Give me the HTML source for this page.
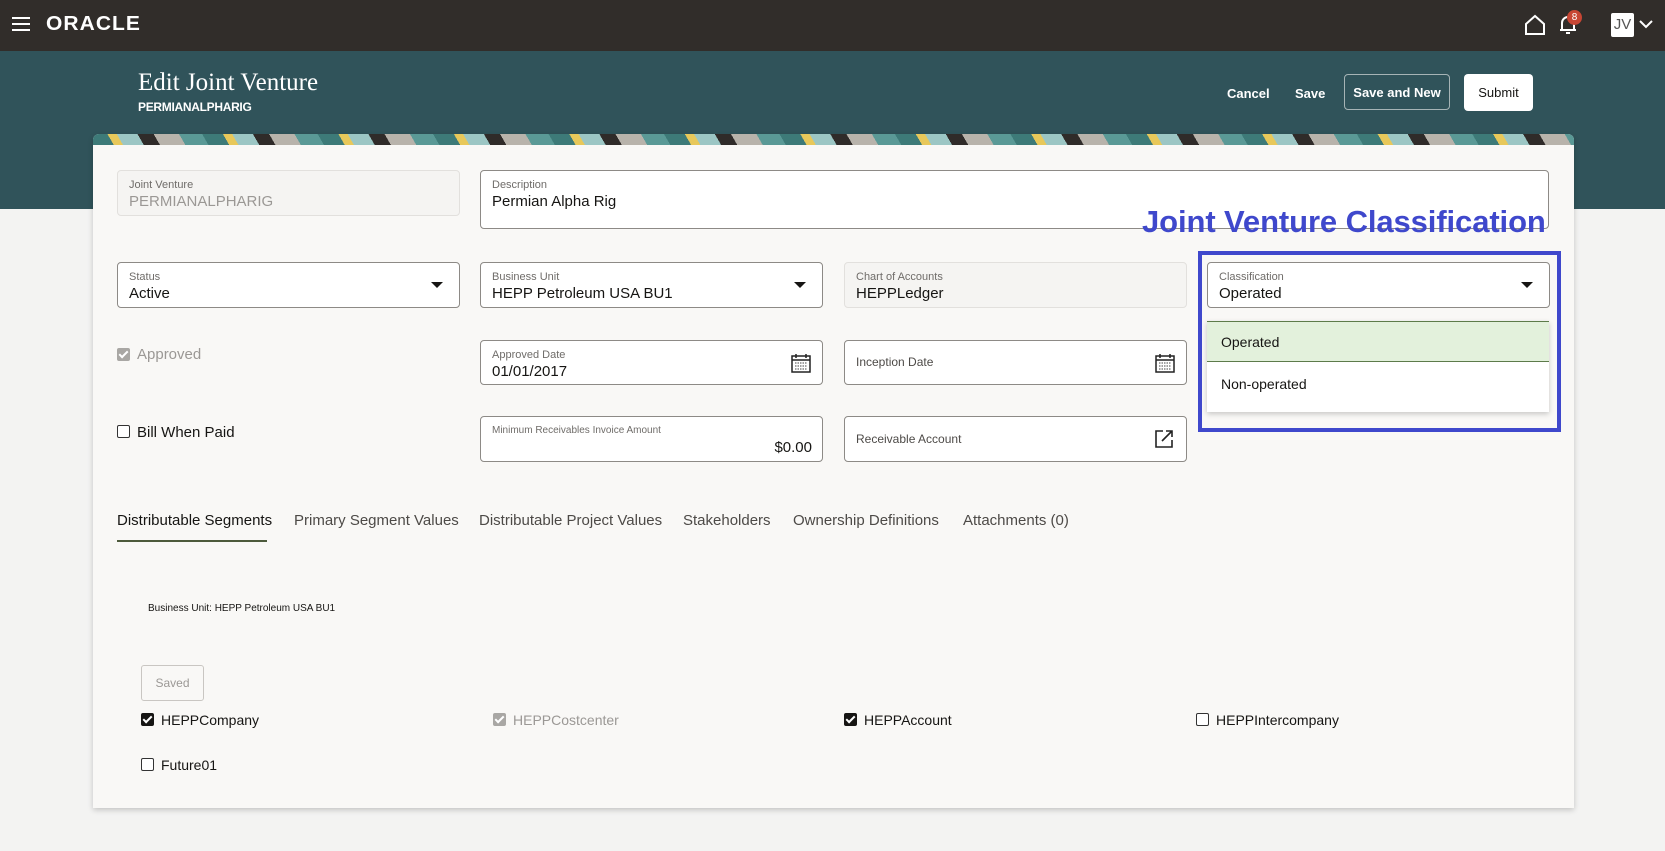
<!DOCTYPE html>
<html><head><meta charset="utf-8"><style>
*{box-sizing:border-box;margin:0;padding:0}
body{width:1665px;height:851px;overflow:hidden;font-family:"Liberation Sans",sans-serif;background:#f3f3f2;position:relative;color:#161513}
.a{position:absolute}
.top{left:0;top:0;width:1665px;height:51px;background:#312d2a}
.hdr{left:0;top:51px;width:1665px;height:158px;background:#30535a}
.card{left:93px;top:134px;width:1481px;height:674px;background:#f9f8f6;box-shadow:0 2px 6px rgba(0,0,0,.2);border-radius:6px 6px 0 0;overflow:hidden}
.band{left:0;top:0;width:100%;height:11px;background:repeating-linear-gradient(60deg,#3d7a78 0 18px,#e8c85a 18px 26px,#9cc6c4 26px 44px,#2f2b29 44px 58px,#b8b3ab 58px 80px,#5a9996 80px 100px)}
.f{position:absolute;border:1px solid #8d8a86;border-radius:4px;background:#fff}
.f.ro{background:#f5f4f2;border-color:#e2e0dd}
.lb{position:absolute;left:11px;top:8px;font-size:11px;color:#6f6c69}
.vl{position:absolute;left:11px;top:22px;font-size:15px;color:#161513}
.car{position:absolute;right:16px;top:19px;width:0;height:0;border-left:6px solid transparent;border-right:6px solid transparent;border-top:6px solid #161513}
.btn{font-size:13px;font-weight:bold;color:#fff}
.cb{position:absolute;width:13px;height:13px;border:1.5px solid #333;border-radius:2px;background:#fff}
.cb.on{background:#161513;border-color:#161513}
.cb.on::after{content:"";position:absolute;left:3px;top:0;width:3px;height:7px;border:solid #fff;border-width:0 2px 2px 0;transform:rotate(45deg)}
.cb.dis{background:#a9a7a4;border-color:#a9a7a4}
.t{font-size:14px;color:#161513}
.tab{position:absolute;font-size:15px;color:#4d4a47}
</style></head><body>
<div class="a top">
 <div class="a" style="left:12px;top:17px;width:18px;height:2px;background:#fff;box-shadow:0 6px #fff,0 12px #fff"></div>
 <div class="a" style="left:46px;top:13px;font-size:20px;color:#fff;letter-spacing:1px;font-weight:bold;transform:scaleX(1.05);transform-origin:left">ORACLE</div>
 <svg class="a" style="left:1524px;top:14px" width="22" height="22" viewBox="0 0 22 22"><path d="M2 10 L11 2 L20 10 V20 H2 Z" fill="none" stroke="#fff" stroke-width="2"/></svg>
 <svg class="a" style="left:1558px;top:14px" width="20" height="22" viewBox="0 0 20 22"><path d="M4 16 V9 a6 6 0 0 1 12 0 V16 H18 H2 Z M8 19 h4" fill="none" stroke="#fff" stroke-width="2"/></svg>
 <div class="a" style="left:1567px;top:10px;width:15px;height:15px;border-radius:50%;background:#c74634;color:#fff;font-size:10px;text-align:center;line-height:15px">8</div>
 <div class="a" style="left:1611px;top:13px;width:23px;height:24px;background:#fff;border-radius:2px;color:#555;font-size:15px;text-align:center;line-height:24px">JV</div>
 <svg class="a" style="left:1639px;top:19px" width="14" height="10"><path d="M1 2 L7 8 L13 2" fill="none" stroke="#fff" stroke-width="2"/></svg>
</div>
<div class="a hdr">
 <div class="a" style="left:138px;top:18px;font-family:'Liberation Serif',serif;font-size:25px;color:#fff">Edit Joint Venture</div>
 <div class="a" style="left:138px;top:49px;font-size:12px;font-weight:bold;color:#fff;letter-spacing:-.3px">PERMIANALPHARIG</div>
 <div class="a btn" style="left:1227px;top:35px">Cancel</div>
 <div class="a btn" style="left:1295px;top:35px">Save</div>
 <div class="a btn" style="left:1344px;top:23px;width:106px;height:36px;border:1px solid #a6b4b6;border-radius:4px;text-align:center;line-height:36px">Save and New</div>
 <div class="a btn" style="left:1464px;top:23px;width:69px;height:37px;background:#fff;color:#161513;border-radius:4px;text-align:center;line-height:37px;font-weight:normal">Submit</div>
</div>
<div class="a card">
 <div class="a band"></div>
 <div class="f ro" style="left:24px;top:36px;width:343px;height:46px"><div class="lb">Joint Venture</div><div class="vl" style="color:#9b9895">PERMIANALPHARIG</div></div>
 <div class="f" style="left:387px;top:36px;width:1069px;height:59px"><div class="lb">Description</div><div class="vl">Permian Alpha Rig</div></div>
 <div class="f" style="left:24px;top:128px;width:343px;height:46px"><div class="lb">Status</div><div class="vl">Active</div><div class="car"></div></div>
 <div class="f" style="left:387px;top:128px;width:343px;height:46px"><div class="lb">Business Unit</div><div class="vl">HEPP Petroleum USA BU1</div><div class="car"></div></div>
 <div class="f ro" style="left:751px;top:128px;width:343px;height:46px"><div class="lb">Chart of Accounts</div><div class="vl">HEPPLedger</div></div>
 <div class="f" style="left:1114px;top:128px;width:343px;height:46px"><div class="lb">Classification</div><div class="vl">Operated</div><div class="car"></div></div>
 <div class="cb dis on" style="left:24px;top:214px"></div><div class="a" style="left:44px;top:212px;font-size:15px;color:#9b9895">Approved</div>
 <div class="f" style="left:387px;top:206px;width:343px;height:45px"><div class="lb">Approved Date</div><div class="vl">01/01/2017</div>
  <svg class="a" style="right:11px;top:12px" width="20" height="20"><rect x="1" y="3" width="18" height="16" fill="none" stroke="#222" stroke-width="1.5"/><path d="M1 7 H19 M5 1 V5 M15 1 V5" stroke="#222" stroke-width="1.5"/><path d="M4 10h12M4 13h12M4 16h12" stroke="#444" stroke-dasharray="1.5 1"/></svg></div>
 <div class="f" style="left:751px;top:206px;width:343px;height:45px"><div class="vl" style="top:14px;font-size:12px;color:#4d4a47">Inception Date</div>
  <svg class="a" style="right:11px;top:12px" width="20" height="20"><rect x="1" y="3" width="18" height="16" fill="none" stroke="#222" stroke-width="1.5"/><path d="M1 7 H19 M5 1 V5 M15 1 V5" stroke="#222" stroke-width="1.5"/><path d="M4 10h12M4 13h12M4 16h12" stroke="#444" stroke-dasharray="1.5 1"/></svg></div>
 <div class="cb" style="left:24px;top:291px"></div><div class="a" style="left:44px;top:290px;font-size:15px">Bill When Paid</div>
 <div class="f" style="left:387px;top:282px;width:343px;height:46px"><div class="lb" style="font-size:10px">Minimum Receivables Invoice Amount</div><div class="vl" style="left:auto;right:10px">$0.00</div></div>
 <div class="f" style="left:751px;top:282px;width:343px;height:46px"><div class="vl" style="top:15px;font-size:12px;color:#4d4a47">Receivable Account</div>
  <svg class="a" style="right:12px;top:12px" width="20" height="20"><path d="M9 2 H2 V18 H18 V11 M12 2 H18 V8 M18 2 L8 12" fill="none" stroke="#222" stroke-width="1.6"/></svg></div>
 <div class="a" style="left:1114px;top:187px;width:342px;height:91px;background:#fff;box-shadow:0 2px 5px rgba(0,0,0,.2)">
  <div class="a" style="left:0;top:0;width:100%;height:41px;background:#e3f1dc;border-top:1.5px solid #5d7b4a;border-bottom:1.5px solid #5d7b4a"></div>
  <div class="a t" style="left:14px;top:13px">Operated</div>
  <div class="a t" style="left:14px;top:55px">Non-operated</div>
 </div>
 <div class="tab" style="left:24px;top:378px;color:#161513">Distributable Segments</div>
 <div class="a" style="left:24px;top:406px;width:150px;height:2px;background:#4d5a3c"></div>
 <div class="tab" style="left:201px;top:378px">Primary Segment Values</div>
 <div class="tab" style="left:386px;top:378px">Distributable Project Values</div>
 <div class="tab" style="left:590px;top:378px">Stakeholders</div>
 <div class="tab" style="left:700px;top:378px">Ownership Definitions</div>
 <div class="tab" style="left:870px;top:378px">Attachments (0)</div>
 <div class="a" style="left:55px;top:469px;font-size:10px">Business Unit: HEPP Petroleum USA BU1</div>
 <div class="a" style="left:48px;top:531px;width:63px;height:36px;border:1px solid #c9c6c2;border-radius:3px;font-size:12px;color:#9b9895;text-align:center;line-height:34px">Saved</div>
 <div class="cb on" style="left:48px;top:579px"></div><div class="a t" style="left:68px;top:578px">HEPPCompany</div>
 <div class="cb dis on" style="left:400px;top:579px;background:#a9a7a4;border-color:#a9a7a4"></div><div class="a t" style="left:420px;top:578px;color:#9b9895">HEPPCostcenter</div>
 <div class="cb on" style="left:751px;top:579px"></div><div class="a t" style="left:771px;top:578px">HEPPAccount</div>
 <div class="cb" style="left:1103px;top:579px"></div><div class="a t" style="left:1123px;top:578px">HEPPIntercompany</div>
 <div class="cb" style="left:48px;top:624px"></div><div class="a t" style="left:68px;top:623px">Future01</div>
</div>
<div class="a" style="left:1198px;top:251px;width:363px;height:181px;border:4px solid #3f48cc"></div>
<div class="a" style="left:1142px;top:204px;font-size:31px;font-weight:bold;color:#3f48cc;letter-spacing:-.1px">Joint Venture Classification</div>
</body></html>
